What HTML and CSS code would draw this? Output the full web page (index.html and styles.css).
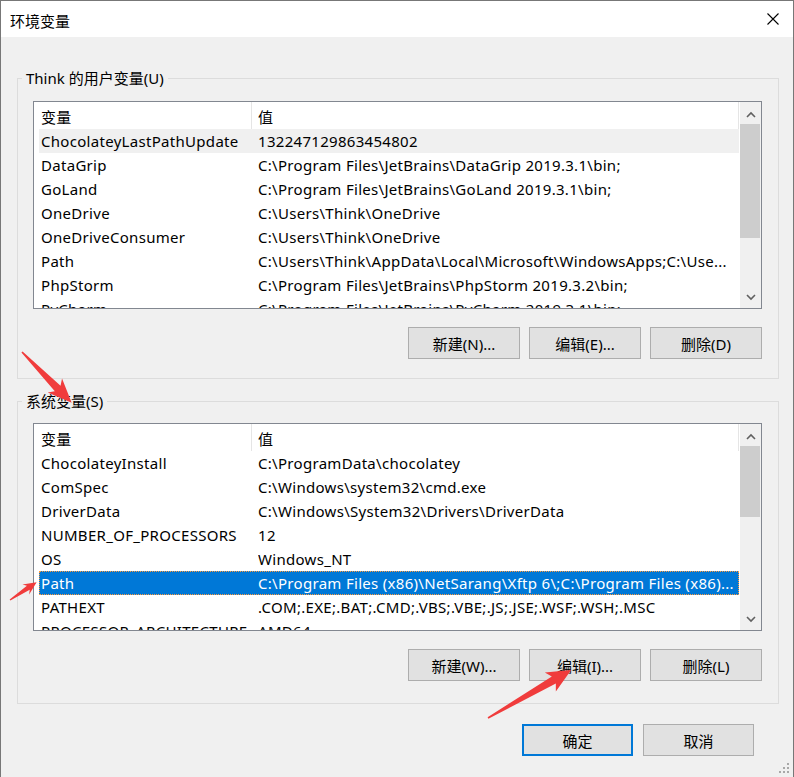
FILE: index.html
```html
<!DOCTYPE html>
<html lang="zh-CN">
<head>
  <meta charset="UTF-8">
  <title>环境变量</title>
  <link rel="stylesheet" href="styles.css">
</head>
<body>
  <div class="window">
    <div class="titlebar">
      <span class="title">环境变量</span>
      <svg class="close" width="12" height="12" viewBox="0 0 12 12">
        <path d="M0.5 0.5 L11.5 11.5 M11.5 0.5 L0.5 11.5" stroke="#000" stroke-width="1.1" fill="none"/>
      </svg>
    </div>

    <div class="content">
      <fieldset class="group group-user">
        <legend>Think 的用户变量(U)</legend>
        <div class="list">
          <div class="list-main">
            <div class="list-head"><span>变量</span><span>值</span></div>
            <div class="row current"><span>ChocolateyLastPathUpdate</span><span>132247129863454802</span></div>
            <div class="row"><span>DataGrip</span><span>C:\Program Files\JetBrains\DataGrip 2019.3.1\bin;</span></div>
            <div class="row"><span>GoLand</span><span>C:\Program Files\JetBrains\GoLand 2019.3.1\bin;</span></div>
            <div class="row"><span>OneDrive</span><span>C:\Users\Think\OneDrive</span></div>
            <div class="row"><span>OneDriveConsumer</span><span>C:\Users\Think\OneDrive</span></div>
            <div class="row"><span>Path</span><span>C:\Users\Think\AppData\Local\Microsoft\WindowsApps;C:\Use...</span></div>
            <div class="row"><span>PhpStorm</span><span>C:\Program Files\JetBrains\PhpStorm 2019.3.2\bin;</span></div>
            <div class="row"><span>PyCharm</span><span>C:\Program Files\JetBrains\PyCharm 2019.3.1\bin;</span></div>
          </div>
          <div class="scrollbar">
            <div class="sb-btn">
              <svg width="10" height="7" viewBox="0 0 10 7"><path d="M1 6 L5 2 L9 6" stroke="#606060" stroke-width="1.6" fill="none"/></svg>
            </div>
            <div class="sb-track"><div class="sb-thumb thumb-user"></div></div>
            <div class="sb-btn">
              <svg width="10" height="7" viewBox="0 0 10 7"><path d="M1 1 L5 5 L9 1" stroke="#606060" stroke-width="1.6" fill="none"/></svg>
            </div>
          </div>
        </div>
        <div class="actions">
          <button class="btn">新建(N)...</button>
          <button class="btn">编辑(E)...</button>
          <button class="btn">删除(D)</button>
        </div>
      </fieldset>

      <fieldset class="group group-system">
        <legend>系统变量(S)</legend>
        <div class="list">
          <div class="list-main">
            <div class="list-head"><span>变量</span><span>值</span></div>
            <div class="row"><span>ChocolateyInstall</span><span>C:\ProgramData\chocolatey</span></div>
            <div class="row"><span>ComSpec</span><span>C:\Windows\system32\cmd.exe</span></div>
            <div class="row"><span>DriverData</span><span>C:\Windows\System32\Drivers\DriverData</span></div>
            <div class="row"><span>NUMBER_OF_PROCESSORS</span><span>12</span></div>
            <div class="row"><span>OS</span><span>Windows_NT</span></div>
            <div class="row selected"><span>Path</span><span>C:\Program Files (x86)\NetSarang\Xftp 6\;C:\Program Files (x86)...</span></div>
            <div class="row"><span>PATHEXT</span><span>.COM;.EXE;.BAT;.CMD;.VBS;.VBE;.JS;.JSE;.WSF;.WSH;.MSC</span></div>
            <div class="row"><span>PROCESSOR_ARCHITECTURE</span><span>AMD64</span></div>
          </div>
          <div class="scrollbar">
            <div class="sb-btn">
              <svg width="10" height="7" viewBox="0 0 10 7"><path d="M1 6 L5 2 L9 6" stroke="#606060" stroke-width="1.6" fill="none"/></svg>
            </div>
            <div class="sb-track"><div class="sb-thumb thumb-system"></div></div>
            <div class="sb-btn">
              <svg width="10" height="7" viewBox="0 0 10 7"><path d="M1 1 L5 5 L9 1" stroke="#606060" stroke-width="1.6" fill="none"/></svg>
            </div>
          </div>
        </div>
        <div class="actions">
          <button class="btn">新建(W)...</button>
          <button class="btn">编辑(I)...</button>
          <button class="btn">删除(L)</button>
        </div>
      </fieldset>

      <div class="dialog-actions">
        <button class="btn btn-default">确定</button>
        <button class="btn">取消</button>
      </div>
    </div>

    <svg class="grip" width="12" height="12" viewBox="0 0 12 12">
      <rect x="9" y="1" width="2" height="2"/>
      <rect x="5" y="5" width="2" height="2"/>
      <rect x="9" y="5" width="2" height="2"/>
      <rect x="1" y="9" width="2" height="2"/>
      <rect x="5" y="9" width="2" height="2"/>
      <rect x="9" y="9" width="2" height="2"/>
    </svg>
  </div>

  <!-- red annotation arrows drawn over the screenshot -->
  <svg class="marks" width="794" height="777" viewBox="0 0 794 777">
    <polygon transform="translate(22 352) rotate(45.6)" points="0,-0.8 51,-4 47,-10 71,0 47,10 51,4 0,0.8"/>
    <polygon transform="translate(10 600) rotate(-33.7)" points="0,-0.6 22,-2.5 19,-6 32,0 19,6 22,2.5 0,0.6"/>
    <polygon transform="translate(488 718) rotate(-30)" points="0,-0.8 76,-4 72,-11 96,0 72,11 76,4 0,0.8"/>
  </svg>
</body>
</html>
```

FILE: styles.css
```css
* {
  box-sizing: border-box;
}

body {
  margin: 0;
  font-family: "Noto Sans", "Noto Sans CJK SC", sans-serif;
  font-size: 15px;
  color: #000;
  background: #f0f0f0;
}

.window {
  position: relative;
  width: 794px;
  height: 777px;
  border: 1px solid #777;
  border-bottom: 0;
  background: #f0f0f0;
  overflow: hidden;
}

.titlebar {
  height: 36px;
  background: #fff;
  display: flex;
  align-items: center;
  justify-content: space-between;
  padding: 2px 14px 0 9px;
}

.close {
  margin-top: -2px;
}

.content {
  padding: 31px 14px 0 16px;
}

.group {
  margin: 0;
  padding: 13px 16px 19px 4px;
  border: 1px solid #dcdcdc;
  min-width: 0;
}

.group legend {
  padding: 0 4px;
  line-height: 20px;
}

.group-system {
  margin-top: 12px;
  padding-top: 12px;
  padding-bottom: 22px;
}

.list {
  margin-left: 11px;
  height: 208px;
  border: 1px solid #828790;
  background: #fff;
  display: flex;
  letter-spacing: 0.3px;
}

.list-main {
  flex: 1;
  overflow: hidden;
}

.list-head {
  display: grid;
  grid-template-columns: 218px 1fr;
  width: 705px;
  height: 27px;
}

.list-head span {
  display: flex;
  align-items: center;
  padding: 2px 0 0 7px;
  border-right: 1px solid #e5e5e5;
}

.list-head span + span {
  padding-left: 6px;
}

.row {
  display: grid;
  grid-template-columns: 219px 1fr;
  height: 24px;
  line-height: 24px;
  margin: 0 1px 0 5px;
  white-space: nowrap;
}

.row span {
  overflow: hidden;
}

.row span:first-child {
  padding-left: 2px;
}

.row.current {
  background: #f0f0f0;
}

.row.selected {
  background: #0078d7;
  color: #fff;
  outline: 1px dotted #ff9a3c;
  outline-offset: -1px;
}

.scrollbar {
  width: 21px;
  background: #f0f0f0;
  display: flex;
  flex-direction: column;
}

.sb-btn {
  height: 22px;
  display: flex;
  align-items: center;
  justify-content: center;
  padding-top: 2px;
}

.sb-btn:last-child {
  padding-top: 0;
}

.sb-track {
  flex: 1;
}

.sb-thumb {
  margin-right: 1px;
  background: #cdcdcd;
}

.thumb-user {
  height: 114px;
}

.thumb-system {
  height: 71px;
}

.actions {
  display: flex;
  justify-content: flex-end;
  gap: 9px;
  margin-top: 18px;
}

.btn {
  width: 112px;
  height: 32px;
  padding: 0;
  border: 1px solid #adadad;
  background: #e1e1e1;
  font: inherit;
  color: #000;
}

.dialog-actions {
  display: flex;
  justify-content: flex-end;
  gap: 10px;
  margin-top: 20px;
  padding-right: 25px;
}

.dialog-actions .btn {
  width: 111px;
}

.btn-default {
  border: 2px solid #0078d7;
}

.grip {
  position: absolute;
  right: 3px;
  bottom: 3px;
  fill: #a8a8a8;
}

.marks {
  position: absolute;
  top: 0;
  left: 0;
  pointer-events: none;
  fill: #f03c3c;
}
```
